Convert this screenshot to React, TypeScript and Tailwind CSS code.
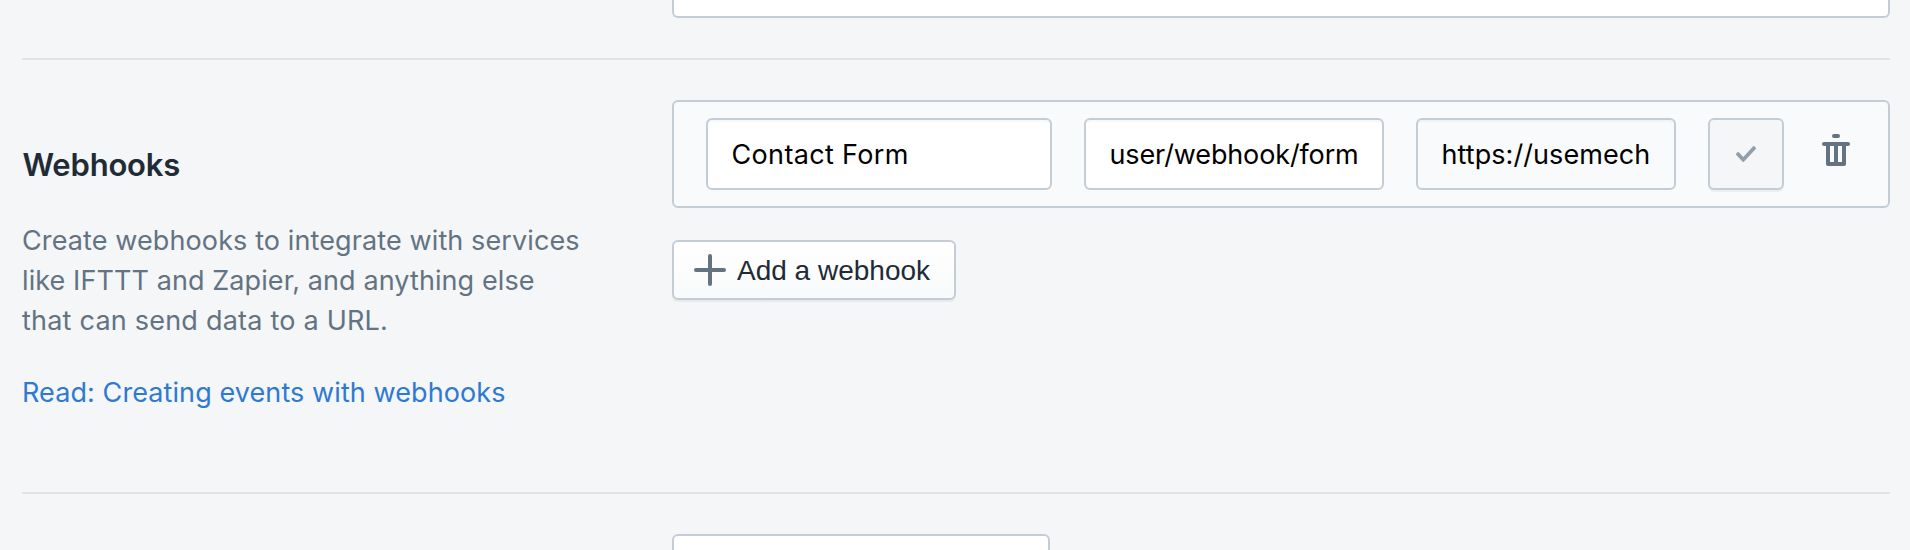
import type { ReactNode } from "react";

function Icon({ path, className }: { path: string; className: string }) {
  return (
    <svg viewBox="0 0 20 20" className={`size-10 shrink-0 fill-current ${className}`} aria-hidden="true">
      <path fillRule="evenodd" d={path} />
    </svg>
  );
}

const PLUS = "M17 9h-6V3a1 1 0 1 0-2 0v6H3a1 1 0 1 0 0 2h6v6a1 1 0 1 0 2 0v-6h6a1 1 0 1 0 0-2";
const CHECK =
  "M8.315 13.859l-3.182-3.417a.506.506 0 0 1 0-.684l.643-.683a.437.437 0 0 1 .642 0l2.22 2.393 4.942-5.327a.437.437 0 0 1 .643 0l.643.684a.504.504 0 0 1 0 .683l-5.91 6.33a.437.437 0 0 1-.642 0";
const TRASH =
  "M16 6H4a1 1 0 1 0 0 2h1v9a1 1 0 0 0 1 1h8a1 1 0 0 0 1-1V8h1a1 1 0 1 0 0-2zM9 4a1 1 0 1 1 0-2h2a1 1 0 1 1 0 2H9zm2 12h2V8h-2v8zm-4 0h2V8H7v8z";

function Field({ children, className }: { children: ReactNode; className: string }) {
  return (
    <div
      className={`flex h-[72px] shrink-0 items-center overflow-hidden whitespace-nowrap rounded-md border-2 border-[#c4cdd5] pt-0.5 pl-[23.5px] text-[27px] leading-10 text-black shadow-[inset_0_2px_0_0_rgba(99,115,129,0.05)] ${className}`}
    >
      {children}
    </div>
  );
}

export default function App() {
  return (
    <main className="flex h-[550px] flex-col overflow-hidden bg-[#f4f6f8] pr-5 pl-[22px] font-['Inter',sans-serif]">
      <div className="ml-[650px] h-[18px] shrink-0 rounded-b-md border-2 border-t-0 border-[#c4cdd5] bg-white" />

      <section className="mt-10 flex h-[434px] shrink-0 border-t-2 border-[#dfe3e8] pt-10">
        <div className="w-[650px] shrink-0 pt-[45px]">
          <h2 className="pl-[0.5px] text-[31px] leading-10 font-semibold tracking-[-0.2px] text-[#212b36]">Webhooks</h2>
          <p className="mt-9 w-[600px] text-[27px] leading-10 tracking-[0.11px] text-[#637381]">
            Create webhooks to integrate with services
            <br />
            <span className="tracking-[0.09px]">like IFTTT and Zapier, and anything else</span>
            <br />
            <span className="tracking-[0.22px]">that can send data to a URL.</span>
          </p>
          <a className="mt-8 block text-[27px] leading-10 tracking-[0.09px] text-[#2f7ad1]">
            Read: Creating events with webhooks
          </a>
        </div>

        <div className="flex flex-1 flex-col items-start gap-8">
          <div className="flex h-[108px] w-full items-center gap-8 rounded-md border-2 border-[#c4cdd5] bg-[#f9fafb] pl-8">
            <Field className="w-[346px] bg-white tracking-[0.34px]">Contact Form</Field>
            <Field className="w-[300px] bg-white tracking-[-0.13px]">user/webhook/form</Field>
            <Field className="w-[260px] bg-[#f9fafb] tracking-[0.07px]">https://usemech</Field>
            <button className="flex h-[72px] w-[76px] shrink-0 items-center justify-center rounded-md border-2 border-[#c4cdd5] bg-[#f4f6f8] shadow-[0_2px_0_0_rgba(22,29,37,0.05)]">
              <Icon path={CHECK} className="text-[#919eab]" />
            </button>
            <button className="mb-2">
              <Icon path={TRASH} className="text-[#637381]" />
            </button>
          </div>

          <button className="flex h-[60px] w-[284px] items-center gap-[7px] rounded-md border-2 border-[#c4cdd5] bg-linear-to-b from-white to-[#f9fafb] pl-4 font-['Liberation_Sans',sans-serif] text-[28px] leading-8 whitespace-nowrap text-[#212b36] shadow-[0_2px_0_0_rgba(22,29,37,0.05)]">
            <Icon path={PLUS} className="text-[#637381]" />
            <span className="pt-0.5">Add a webhook</span>
          </button>
        </div>
      </section>

      <section className="flex h-[120px] shrink-0 border-t-2 border-[#dfe3e8] pt-10">
        <div className="ml-[650px] h-20 w-[378px] rounded-md border-2 border-[#c4cdd5] bg-white" />
      </section>
    </main>
  );
}
